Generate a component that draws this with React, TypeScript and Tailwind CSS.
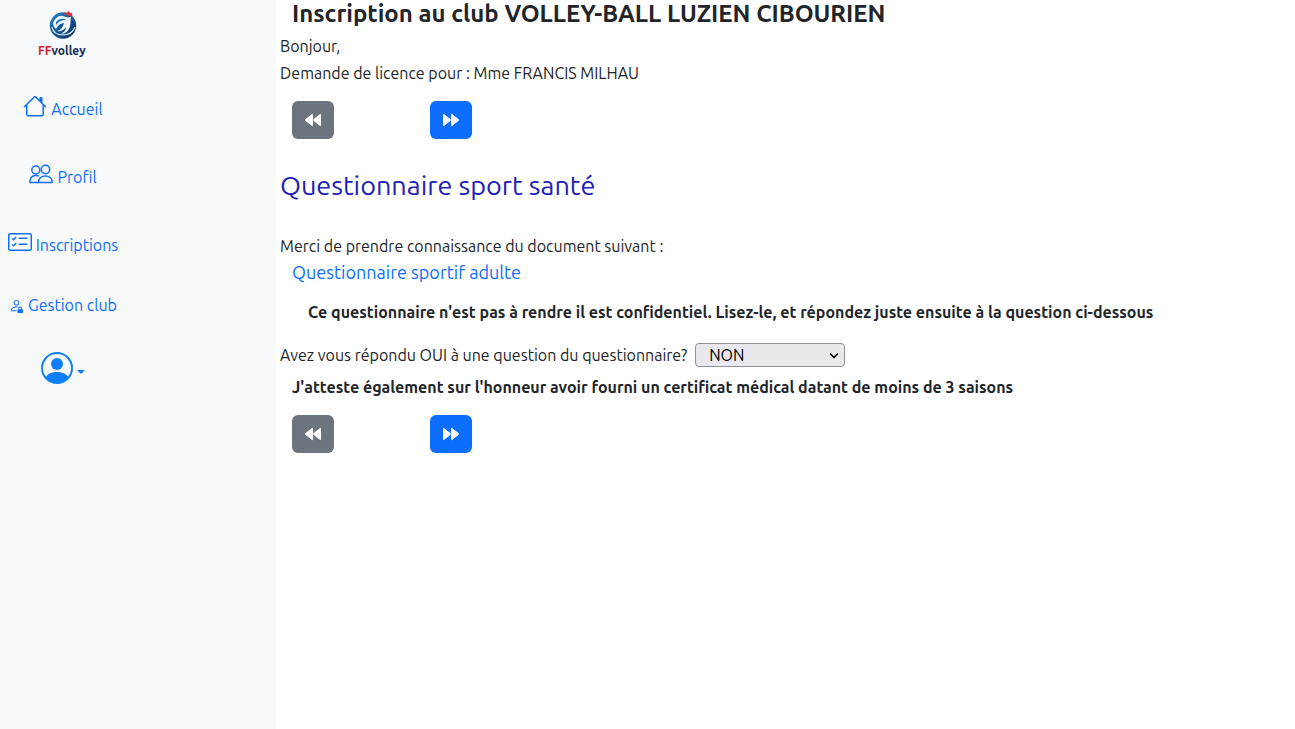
import { useState } from "react";
import { BsCardChecklist, BsHouse, BsPersonCircle, BsPersonLock } from "react-icons/bs";

function Logo() {
    return (
        <svg width="50" height="50" viewBox="0 0 50 50" role="img" aria-label="FFvolley">
            <defs>
                <linearGradient id="ball" x1="0" y1="0" x2="1" y2="1">
                    <stop offset="0" stopColor="#2a86c8" />
                    <stop offset="0.5" stopColor="#145a96" />
                    <stop offset="1" stopColor="#0a2850" />
                </linearGradient>
            </defs>
            <circle cx="25" cy="17.500" r="13.200" fill="url(#ball)" />
            {/* Rooster neck and wing */}
            <path d="M15 15c2-5 6-8 10-7 3 1 5 2 8 1-1 3 0 6-1 9-1 5-5 8-9 8 3-2 5-4 5-7-3 4-6 5-9 4 4-1 6-4 7-8-3 0-6 2-8 6-2-2-3-4-3-6z" fill="#eef5fa" />
            <path d="M18 14c3-4 8-4 10-2-4 0-7 1-10 5z" fill="#2277b8" />
            {/* Seams */}
            <path d="M14 19c1 5 5 8 11 8s10-3 12-8" fill="none" stroke="#e6f0f8" strokeWidth="1.200" />
            <path d="M26 6c0-2 2-2 3-1 0-2 3-2 3 0 2-1 3 1 2 4-3-1-5-3-8-3z" fill="#e3303b" />
            <text x="0" y="47" fontSize="12" fontWeight="700" fill="#13294f">
                <tspan fill="#d8232e">FF</tspan>volley
            </text>
        </svg>
    );
}

function PeopleIcon() {
    return (
        <svg width="24" height="24" viewBox="0 0 24 24" fill="none" stroke="currentColor" strokeWidth="1.500" aria-hidden="true">
            <circle cx="6.800" cy="8" r="4" />
            <circle cx="16.500" cy="7.500" r="4.200" />
            <path d="M9.500 20.500H.8c0-4 1.800-6.500 5-7 1.500-.2 3 0 4 .7" strokeLinejoin="round" />
            <path d="M9.500 20.500h13.700c0-4-2.700-6.500-6.800-6.500s-6.900 2.500-6.900 6.500z" strokeLinejoin="round" />
        </svg>
    );
}

function RewindIcon({ flip = false }: { flip?: boolean }) {
    return (
        <svg width="16" height="16" viewBox="0 0 16 16" fill="currentColor" stroke="currentColor" strokeLinejoin="round" aria-hidden="true" className={flip ? "-scale-x-100" : ""}>
            <path d="M7.400 2.300v11.400L.7 8.600V7.400zM15.500 2.300v11.400L8.800 8.600V7.400z" />
        </svg>
    );
}

function StepButtons() {
    return (
        <div className="flex gap-24 px-3">
            <button type="button" aria-label="Précédent" className="flex h-[38px] w-[42px] items-center justify-center rounded-md bg-[#6c757d] text-white">
                <RewindIcon />
            </button>
            <button type="button" aria-label="Suivant" className="flex h-[38px] w-[42px] items-center justify-center rounded-md bg-[#0d6efd] text-white">
                <RewindIcon flip />
            </button>
        </div>
    );
}

export default function App() {
    const [answer, setAnswer] = useState("NON");

    return (
        <div className="flex min-h-screen bg-white font-['Ubuntu','Open_Sans',sans-serif] text-base text-[#212529]">
            {/* Sidebar */}
            <aside className="w-[276px] shrink-0 bg-[#f8f9fb]">
                <nav className="flex w-[126px] flex-col items-center pt-2 text-[#0d6efd]">
                    <a href="#"><Logo /></a>
                    <a href="#accueil" className="mt-9 flex items-start gap-1">
                        <BsHouse size={24} />
                        <span className="pt-[3px]">Accueil</span>
                    </a>
                    <a href="#profil" className="mt-[41px] flex items-start gap-1">
                        <PeopleIcon />
                        <span className="pt-[3px]">Profil</span>
                    </a>
                    <a href="#inscriptions" className="mt-[41px] flex items-start gap-1">
                        <BsCardChecklist size={24} />
                        <span className="pt-[3px]">Inscriptions</span>
                    </a>
                    <a href="#gestion" className="mt-9 flex items-center gap-1">
                        <BsPersonLock size={15} />
                        <span>Gestion club</span>
                    </a>
                    <button type="button" aria-label="Mon compte" className="mt-[35px] flex items-center gap-1 text-[#0d7ffd]">
                        <BsPersonCircle size={32} />
                        <svg width="8" height="4" viewBox="0 0 8 4" fill="currentColor" className="mt-2" aria-hidden="true">
                            <path d="M0 0h8L4 4z" />
                        </svg>
                    </button>
                </nav>
            </aside>

            {/* Content */}
            <main className="min-w-0 flex-1 px-1">
                <h1 className="px-3 text-2xl leading-7 font-semibold">Inscription au club VOLLEY-BALL LUZIEN CIBOURIEN</h1>
                <p className="mt-1.5">Bonjour,</p>
                <p className="mt-[3px] mb-4">Demande de licence pour : Mme FRANCIS MILHAU</p>
                <StepButtons />

                <h2 className="mt-7 text-[27px] leading-9 font-normal text-[#2222b4]">Questionnaire sport santé</h2>
                <p className="mt-[31px]">Merci de prendre connaissance du document suivant :</p>
                <p className="px-3 text-lg leading-7">
                    <a href="#questionnaire" className="text-[#0d6efd]">Questionnaire sportif adulte</a>
                </p>
                <p className="mt-3.5 px-7 font-semibold">
                    Ce questionnaire n'est pas à rendre il est confidentiel. Lisez-le, et répondez juste ensuite à la question ci-dessous
                </p>

                <div className="mt-[19px] flex items-center gap-2">
                    <label htmlFor="reponse">Avez vous répondu OUI à une question du questionnaire?</label>
                    <div className="relative">
                        <select
                            id="reponse"
                            value={answer}
                            onChange={(e) => setAnswer(e.target.value)}
                            className="block h-6 w-[150px] appearance-none rounded border border-[#8f8f9d] bg-[#e9e9ed] px-[13px] leading-5 text-black"
                        >
                            <option>NON</option>
                            <option>OUI</option>
                        </select>
                        <svg width="10" height="6" viewBox="0 0 10 6" fill="none" stroke="#000" strokeWidth="1.600" strokeLinecap="round" strokeLinejoin="round" className="pointer-events-none absolute top-2.5 right-1.5" aria-hidden="true">
                            <path d="M1.500 1L5 4.500 8.500 1" />
                        </svg>
                    </div>
                </div>
                <p className="mt-2 mb-4 px-3 font-semibold">
                    J'atteste également sur l'honneur avoir fourni un certificat médical datant de moins de 3 saisons
                </p>
                <StepButtons />
            </main>
        </div>
    );
}
